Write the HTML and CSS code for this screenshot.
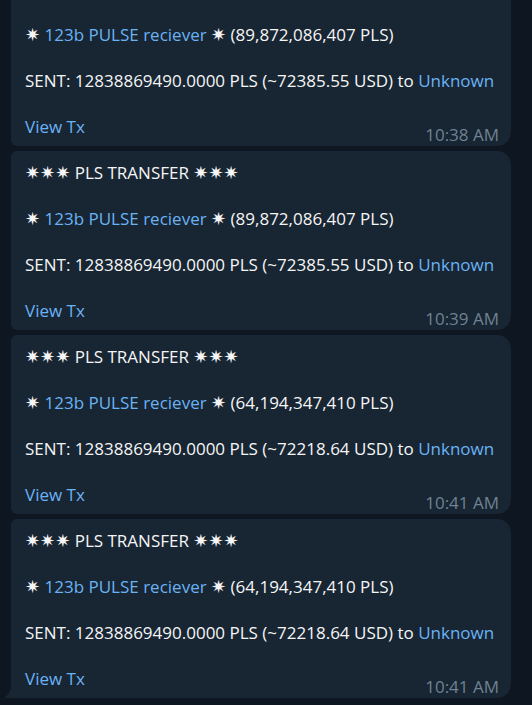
FILE: index.html
```html
<!DOCTYPE html>
<html>
<head>
<meta charset="utf-8">
<link rel="stylesheet" href="styles.css">
</head>
<body>
<div class="chat">
  <div class="bubble">
    <p class="line"><span class="star">✷✷✷</span> PLS TRANSFER <span class="star">✷✷✷</span></p>
    <p class="line"><span class="star">✷</span> <span class="link">123b PULSE reciever</span> <span class="star">✷</span> (89,872,086,407 PLS)</p>
    <p class="line">SENT: 12838869490.0000 PLS (~72385.55 USD) to <span class="link">Unknown</span></p>
    <div class="foot"><span class="link">View Tx</span><span class="time">10:38 AM</span></div>
  </div>
  <div class="bubble">
    <p class="line"><span class="star">✷✷✷</span> PLS TRANSFER <span class="star">✷✷✷</span></p>
    <p class="line"><span class="star">✷</span> <span class="link">123b PULSE reciever</span> <span class="star">✷</span> (89,872,086,407 PLS)</p>
    <p class="line">SENT: 12838869490.0000 PLS (~72385.55 USD) to <span class="link">Unknown</span></p>
    <div class="foot"><span class="link">View Tx</span><span class="time">10:39 AM</span></div>
  </div>
  <div class="bubble">
    <p class="line"><span class="star">✷✷✷</span> PLS TRANSFER <span class="star">✷✷✷</span></p>
    <p class="line"><span class="star">✷</span> <span class="link">123b PULSE reciever</span> <span class="star">✷</span> (64,194,347,410 PLS)</p>
    <p class="line">SENT: 12838869490.0000 PLS (~72218.64 USD) to <span class="link">Unknown</span></p>
    <div class="foot"><span class="link">View Tx</span><span class="time">10:41 AM</span></div>
  </div>
  <div class="bubble last">
    <p class="line"><span class="star">✷✷✷</span> PLS TRANSFER <span class="star">✷✷✷</span></p>
    <p class="line"><span class="star">✷</span> <span class="link">123b PULSE reciever</span> <span class="star">✷</span> (64,194,347,410 PLS)</p>
    <p class="line">SENT: 12838869490.0000 PLS (~72218.64 USD) to <span class="link">Unknown</span></p>
    <div class="foot"><span class="link">View Tx</span><span class="time">10:41 AM</span></div>
    <svg class="tail" width="12" height="12" viewBox="0 0 12 12"><path d="M12 0 L12 12 L1 12 C3 10 8 7 8 0 Z" fill="#182533"/></svg>
  </div>
</div>
</body>
</html>
```
FILE: styles.css
```css
html, body {
  margin: 0;
  padding: 0;
  background: #0e1621;
  height: 705px;
  overflow: hidden;
}
.chat {
  display: flex;
  flex-direction: column;
  gap: 5px;
  margin-top: -33px;
  padding: 0 21px 0 11px;
  font-family: "Open Sans", "DejaVu Sans", sans-serif;
  font-size: 17px;
  color: #f5f5f5;
}
.bubble {
  position: relative;
  background: #182533;
  border-radius: 6px 14px 14px 6px;
  padding: 10px 12px 8px 14px;
}
.bubble.last {
  border-bottom-left-radius: 0;
}
.line {
  margin: 0 0 23px 0;
  line-height: 23px;
  white-space: nowrap;
}
.star {
  font-family: "DejaVu Sans", sans-serif;
  font-size: 18px;
  line-height: 1;
}
.link {
  color: #6ab3f3;
}
.foot {
  display: flex;
  justify-content: space-between;
  align-items: flex-end;
  line-height: 23px;
}
.time {
  color: #6f8292;
  font-size: 17px;
  line-height: 23px;
  margin-bottom: -8px;
}
.tail {
  position: absolute;
  left: -8px;
  bottom: 0;
  display: block;
}
```
